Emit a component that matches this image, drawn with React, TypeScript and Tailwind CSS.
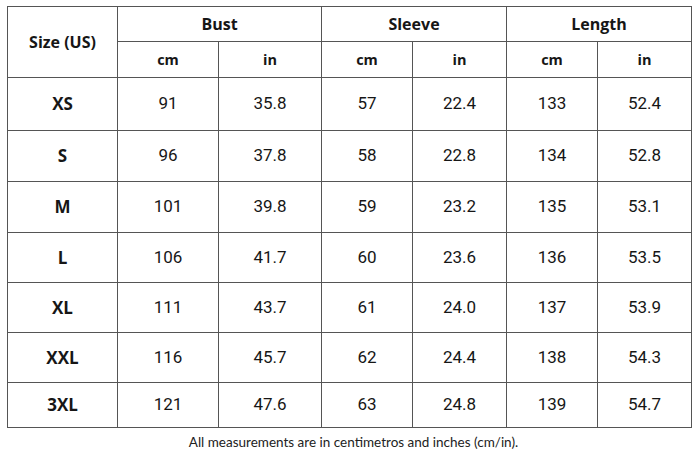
import React from "react";

const rows: [string, string, string, string, string, string, string][] = [
  ["XS", "91", "35.8", "57", "22.4", "133", "52.4"],
  ["S", "96", "37.8", "58", "22.8", "134", "52.8"],
  ["M", "101", "39.8", "59", "23.2", "135", "53.1"],
  ["L", "106", "41.7", "60", "23.6", "136", "53.5"],
  ["XL", "111", "43.7", "61", "24.0", "137", "53.9"],
  ["XXL", "116", "45.7", "62", "24.4", "138", "54.3"],
  ["3XL", "121", "47.6", "63", "24.8", "139", "54.7"],
];

const heights = ["h-[52px]", "h-[50px]", "h-[50px]", "h-[49px]", "h-[49px]", "h-[49px]", "h-[44px]"];

export default function App() {
  return (
    <div className="w-[700px] h-[467px] bg-white text-[#161616] pt-[6px] pl-[7px] overflow-hidden">
      <div className="w-[685px] grid grid-cols-[109px_100px_102px_90px_93px_90px_93px] gap-px bg-[#555555] border border-[#555555]">
        <div className="row-span-2 bg-white flex items-center justify-center font-['Open_Sans',sans-serif] font-bold text-[16px]">
          Size (US)
        </div>
        {["Bust", "Sleeve", "Length"].map((h) => (
          <div
            key={h}
            className="col-span-2 h-[34px] bg-white flex items-center justify-center font-['Open_Sans',sans-serif] font-bold text-[16px]"
          >
            {h}
          </div>
        ))}
        {["cm", "in", "cm", "in", "cm", "in"].map((u, i) => (
          <div
            key={i}
            className="h-[35px] bg-white flex items-center justify-center font-['Open_Sans',sans-serif] font-bold text-[14.5px]"
          >
            {u}
          </div>
        ))}
        {rows.map((r, ri) => (
          <React.Fragment key={r[0]}>
            <div
              className={`${heights[ri]} bg-white flex items-center justify-center font-['Open_Sans',sans-serif] font-bold text-[17px]`}
            >
              {r[0]}
            </div>
            {r.slice(1).map((v, ci) => (
              <div
                key={ci}
                className={`${heights[ri]} bg-white flex items-center justify-center font-['Roboto',sans-serif] text-[17px]`}
              >
                {v}
              </div>
            ))}
          </React.Fragment>
        ))}
      </div>
      <div className="w-[693px] mt-[4px] text-center font-['Lato',sans-serif] text-[13.5px] text-[#222]">
        All measurements are in centimetros and inches (cm/in).
      </div>
    </div>
  );
}
